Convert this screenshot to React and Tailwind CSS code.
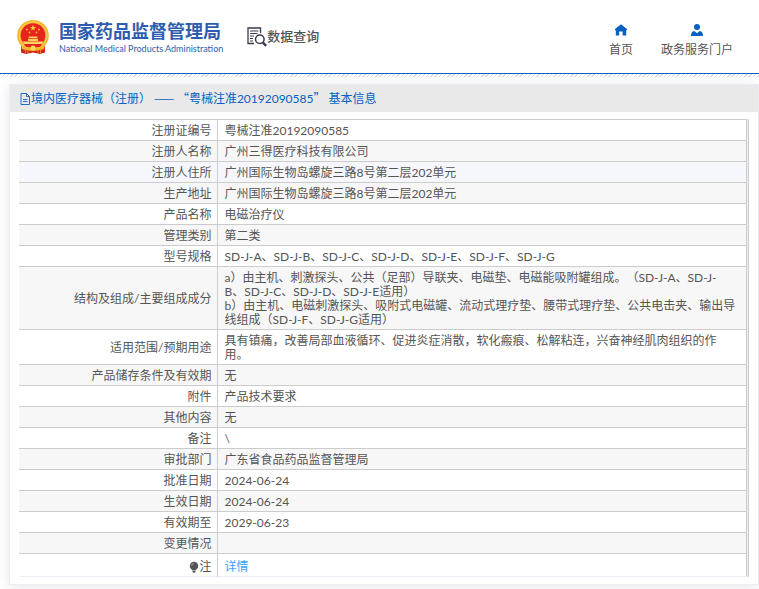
import clsx from "clsx";

const rows = [
  { label: "注册证编号", value: "粤械注准20192090585" },
  { label: "注册人名称", value: "广州三得医疗科技有限公司" },
  { label: "注册人住所", value: "广州国际生物岛螺旋三路8号第二层202单元", active: true },
  { label: "生产地址", value: "广州国际生物岛螺旋三路8号第二层202单元" },
  { label: "产品名称", value: "电磁治疗仪" },
  { label: "管理类别", value: "第二类" },
  { label: "型号规格", value: "SD-J-A、SD-J-B、SD-J-C、SD-J-D、SD-J-E、SD-J-F、SD-J-G" },
  {
    label: "结构及组成/主要组成成分",
    value:
      "a）由主机、刺激探头、公共（足部）导联夹、电磁垫、电磁能吸附罐组成。（SD-J-A、SD-J-\nB、SD-J-C、SD-J-D、SD-J-E适用）\nb）由主机、电磁刺激探头、吸附式电磁罐、流动式理疗垫、腰带式理疗垫、公共电击夹、输出导线组成（SD-J-F、SD-J-G适用）",
  },
  {
    label: "适用范围/预期用途",
    value: "具有镇痛，改善局部血液循环、促进炎症消散，软化瘢痕、松解粘连，兴奋神经肌肉组织的作用。",
  },
  { label: "产品储存条件及有效期", value: "无" },
  { label: "附件", value: "产品技术要求" },
  { label: "其他内容", value: "无" },
  { label: "备注", value: "\\" },
  { label: "审批部门", value: "广东省食品药品监督管理局" },
  { label: "批准日期", value: "2024-06-24" },
  { label: "生效日期", value: "2024-06-24" },
  { label: "有效期至", value: "2029-06-23" },
  { label: "变更情况", value: "" },
];

const Emblem = () => (
  <svg viewBox="0 0 32 34" className="h-[34px] w-8" aria-hidden="true">
    <path d="M4 23 L4 32.500 L9 34 L16 32.500 L23 34 L28 32.500 L28 23 Z" fill="#d8201c" />
    <ellipse cx="16" cy="15.500" rx="15.800" ry="15.500" fill="#f3b62a" />
    <circle cx="16" cy="15.500" r="13.800" fill="none" stroke="#f9d264" strokeWidth="1" />
    <circle cx="16" cy="15.500" r="12.300" fill="#e8231c" />
    <path
      d="M16 4.800l.8 2.200h2.300l-1.900 1.400.7 2.200-1.900-1.300-1.900 1.300.7-2.200-1.900-1.400h2.300z"
      fill="#fbd84a"
    />
    <g fill="#f8c840">
      <circle cx="10" cy="9.500" r="0.9" />
      <circle cx="22" cy="9.500" r="0.9" />
      <circle cx="12.500" cy="12.500" r="0.9" />
      <circle cx="19.500" cy="12.500" r="0.9" />
    </g>
    <path d="M12 16.500h8l.8 1.800h-9.600zM11 19h10v2H11zM5.500 21.500h21L25 24H7z" fill="#fbd560" />
    <path d="M7 24.500h18l-2 2.500H9z" fill="#e8231c" />
    <path d="M4 25 Q10 30 16 26.500 Q22 30 28 25 L27 29 Q21 31 16 28.500 Q11 31 5 29 Z" fill="#f3b62a" />
    <circle cx="16" cy="28" r="2.600" fill="#fbd560" />
    <path d="M8.500 30v3.500M11 30v3M21 30v3M23.500 30v3.500" stroke="#f3a62a" strokeWidth="0.8" />
  </svg>
);

const QueryIcon = () => (
  <svg viewBox="0 0 20 20" className="h-5 w-5" fill="none" stroke="#3a3a4c" aria-hidden="true">
    <path d="M13.500 6V1H1v15.500h6" strokeWidth="1.300" />
    <path d="M3 4h8.500M3 6.500h7.500M3 9h4M3 11.500h3M3 14h3" strokeWidth="1" />
    <circle cx="12.800" cy="12.300" r="4.300" strokeWidth="1.500" />
    <path d="M15.700 15.300l3.500 3.500" strokeWidth="2.400" />
  </svg>
);

const HomeIcon = () => (
  <svg viewBox="0 0 12 12" className="h-3 w-3" fill="#0561c3" aria-hidden="true">
    <path d="M6 .3L0 5v1.200h.8V11.500h3.400V7.500h3.400v4h3.600V6.200H12V5z" />
  </svg>
);

const UserIcon = () => (
  <svg viewBox="0 0 12 12" className="h-3 w-3" fill="#0561c3" aria-hidden="true">
    <circle cx="6" cy="3" r="3" />
    <path d="M0 12c0-3 1-4.500 3.300-5L6 9.300 8.700 7C11 7.500 12 9 12 12z" />
  </svg>
);

const DocIcon = () => (
  <svg viewBox="0 0 11 12" className="h-3 w-[11px]" fill="none" stroke="#0561c3" aria-hidden="true">
    <path d="M1 .5h5.500l3 3v8H1zM6.500 .5v3h3M3 6.500h4.500M3 8.500h4.500" strokeWidth="0.900" />
  </svg>
);

const BulbIcon = () => (
  <svg viewBox="0 0 10 12" className="h-3 w-[10px]" aria-hidden="true">
    <path d="M5 .8a4.200 4.200 0 0 0-2.300 7.700L3.500 9.500h3l.8-1A4.200 4.200 0 0 0 5 .8zM3.500 10h3v1l-1 .8h-1l-1-.8z" fill="#555" />
    <path d="M2.500 4.500A2.600 2.600 0 0 1 4.500 2.500" fill="none" stroke="#ddd" strokeWidth="0.700" />
  </svg>
);

const Header = () => (
  <header className="flex h-[74px] items-center border-b border-[#0561c3] pr-[26px] pl-[17px]">
    <a href="#" className="flex items-center gap-[10px]">
      <Emblem />
      <span className="flex flex-col text-[#2d5dae]">
        <span className="text-[18px] leading-6 font-bold">国家药品监督管理局</span>
        <span className="font-['Lato',sans-serif] text-[9px] leading-3">
          National Medical Products Administration
        </span>
      </span>
    </a>
    <a href="#" className="ml-6 flex items-center text-[13px] font-medium text-[#555]">
      <QueryIcon />
      数据查询
    </a>
    <nav className="ml-auto flex gap-7 pt-2">
      <a href="#" className="flex flex-col items-center gap-[6px]">
        <HomeIcon />
        <span className="leading-4">首页</span>
      </a>
      <a href="#" className="flex flex-col items-center gap-[6px]">
        <UserIcon />
        <span className="leading-4">政务服务门户</span>
      </a>
    </nav>
  </header>
);

const DetailTable = () => (
  <div className="border-r border-[#ccc] bg-[#ebeef5] pr-px">
    <table className="w-full table-fixed border-collapse bg-white leading-[14px]">
      <tbody>
        {rows.map((row, index) => (
          <tr
            key={row.label}
            className={clsx(
              "border-t border-r border-[#ccc]",
              row.active ? "bg-[#f5f7fc]" : index % 2 === 1 && "bg-[#f7f7f7]"
            )}
          >
            <th
              scope="row"
              className="w-[198px] border-r border-[#ccc] pt-1 pr-[5px] pb-[2px] text-right font-normal"
            >
              {row.label}
            </th>
            <td className="h-[21px] px-[7px] pt-1 pb-[2px] whitespace-pre-line">{row.value}</td>
          </tr>
        ))}
        <tr className="border-t border-r border-b border-[#ccc] border-b-[#ebeef5]">
          <th scope="row" className="border-r border-[#ccc] pt-[6px] pr-[5px] pb-[2px] font-normal">
            <span className="flex items-center justify-end">
              <BulbIcon />注
            </span>
          </th>
          <td className="h-[23px] px-[7px] pt-[6px] pb-[2px]">
            <a href="#" className="text-[#409eff]">
              详情
            </a>
          </td>
        </tr>
      </tbody>
    </table>
  </div>
);

const App = () => {
  return (
    <div className="min-h-screen bg-white font-['Lato','Noto_Sans_CJK_SC',sans-serif] text-[12px] text-[#555] [text-spacing-trim:space-all]">
      <Header />
      <div className="h-[3px] bg-[repeating-linear-gradient(135deg,#ddd_0px,#ddd_1px,#fff_1px,#fff_3px)]" />
      <main className="mt-[7px] ml-[9px] border border-[#ebeef5] shadow-[0_2px_12px_rgba(0,0,0,0.1)]">
        <h1 className="flex h-[27px] items-center bg-[#e9e9e9] pl-[10px] text-[#0561c3]">
          <DocIcon />
          {/* dashes and quotes are full-width, so they come from the CJK family */}
          <span>
            境内医疗器械（注册） <span className="font-['Noto_Sans_CJK_SC',sans-serif]">—— “</span>
            粤械注准20192090585<span className="font-['Noto_Sans_CJK_SC',sans-serif]">”</span> 基本信息
          </span>
        </h1>
        <div className="px-[9px] py-[7px]">
          <DetailTable />
        </div>
      </main>
    </div>
  );
};

export default App;
